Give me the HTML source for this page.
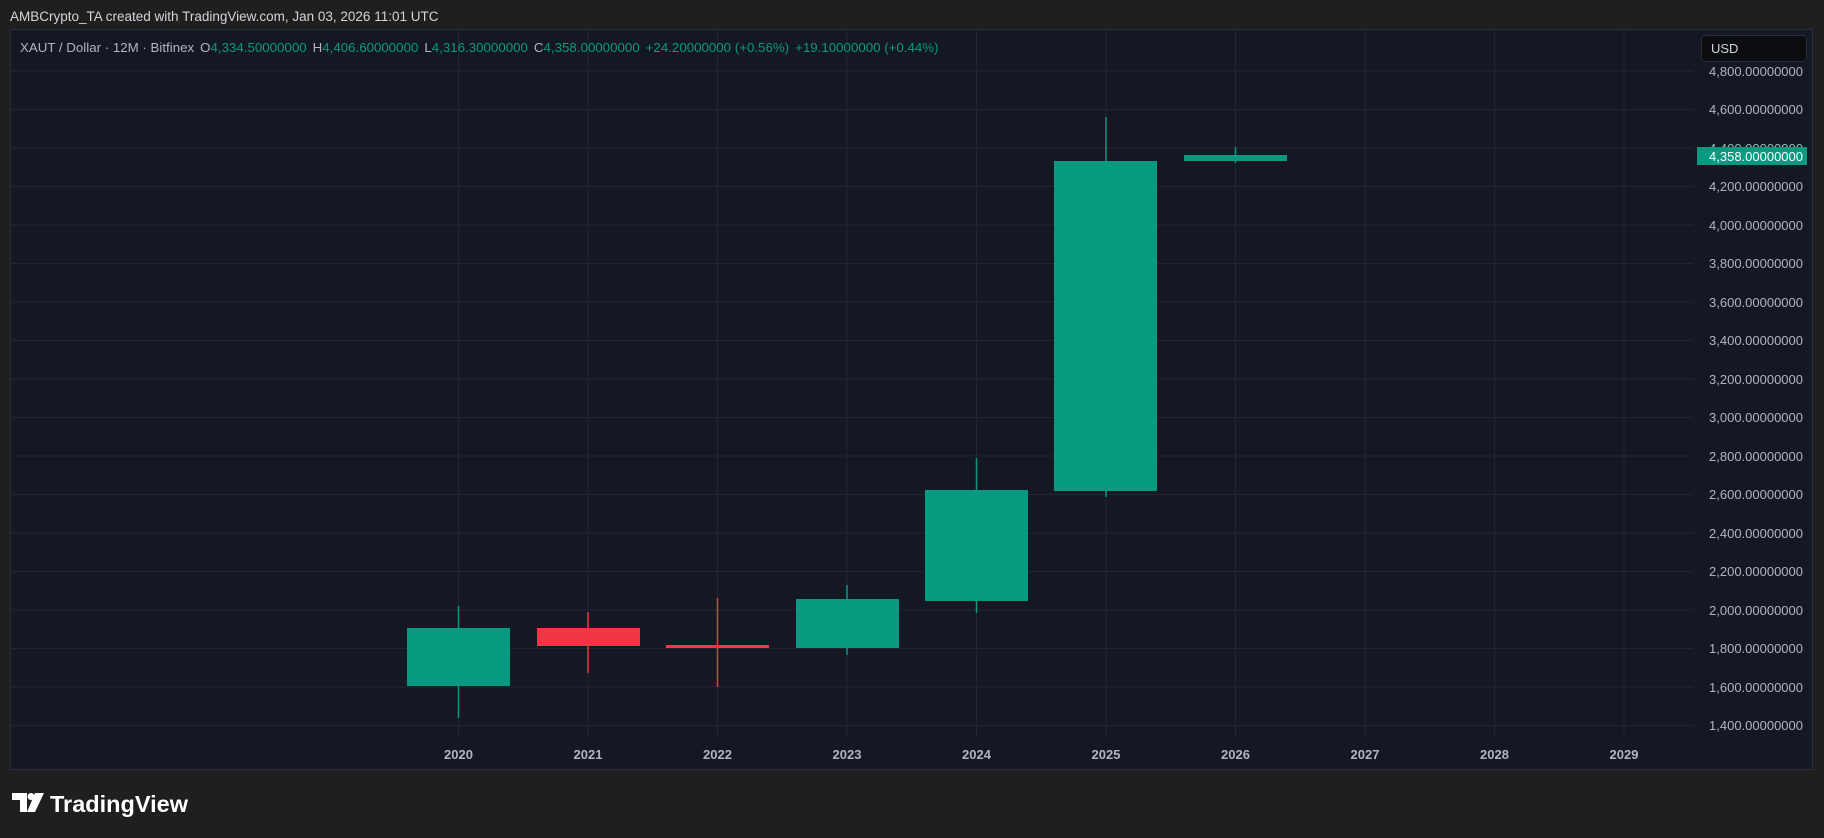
<!DOCTYPE html>
<html><head><meta charset="utf-8"><style>
html,body{margin:0;padding:0;background:#1f1f1f;width:1824px;height:838px;overflow:hidden;font-family:"Liberation Sans",sans-serif}
svg{display:block}
</style></head><body>
<svg width="1824" height="838" viewBox="0 0 1824 838" xmlns="http://www.w3.org/2000/svg" font-family="Liberation Sans, sans-serif">
<rect x="0" y="0" width="1824" height="838" fill="#1f1f1f"/>
<text x="10" y="21" fill="#d1d4dc" font-size="13.5">AMBCrypto_TA created with TradingView.com, Jan 03, 2026 11:01 UTC</text>
<rect x="10.5" y="29.5" width="1802" height="740" fill="#141823" stroke="#2a2e39"/>
<g stroke="#222633" stroke-width="1">
<line x1="11" x2="1693" y1="71" y2="71"/><line x1="11" x2="1693" y1="109.5" y2="109.5"/><line x1="11" x2="1693" y1="148" y2="148"/><line x1="11" x2="1693" y1="186.5" y2="186.5"/><line x1="11" x2="1693" y1="225" y2="225"/><line x1="11" x2="1693" y1="263.5" y2="263.5"/><line x1="11" x2="1693" y1="302" y2="302"/><line x1="11" x2="1693" y1="340.5" y2="340.5"/><line x1="11" x2="1693" y1="379" y2="379"/><line x1="11" x2="1693" y1="417.5" y2="417.5"/><line x1="11" x2="1693" y1="456" y2="456"/><line x1="11" x2="1693" y1="494.5" y2="494.5"/><line x1="11" x2="1693" y1="533" y2="533"/><line x1="11" x2="1693" y1="571.5" y2="571.5"/><line x1="11" x2="1693" y1="610" y2="610"/><line x1="11" x2="1693" y1="648.5" y2="648.5"/><line x1="11" x2="1693" y1="687" y2="687"/><line x1="11" x2="1693" y1="725.5" y2="725.5"/>
<line x1="458.5" x2="458.5" y1="30" y2="738"/><line x1="588" x2="588" y1="30" y2="738"/><line x1="717.5" x2="717.5" y1="30" y2="738"/><line x1="847" x2="847" y1="30" y2="738"/><line x1="976.5" x2="976.5" y1="30" y2="738"/><line x1="1106" x2="1106" y1="30" y2="738"/><line x1="1235.5" x2="1235.5" y1="30" y2="738"/><line x1="1365" x2="1365" y1="30" y2="738"/><line x1="1494.5" x2="1494.5" y1="30" y2="738"/><line x1="1624" x2="1624" y1="30" y2="738"/>
</g>
<text x="20" y="52" font-size="13.3" fill="#b2b5be">XAUT / Dollar · 12M · Bitfinex<tspan dx="6">O</tspan><tspan fill="#089981">4,334.50000000</tspan><tspan dx="6">H</tspan><tspan fill="#089981">4,406.60000000</tspan><tspan dx="6">L</tspan><tspan fill="#089981">4,316.30000000</tspan><tspan dx="6">C</tspan><tspan fill="#089981">4,358.00000000</tspan><tspan dx="6" fill="#089981">+24.20000000 (+0.56%)</tspan><tspan dx="6" fill="#089981">+19.10000000 (+0.44%)</tspan></text>
<g stroke-width="1.5">
<line x1="458.5" x2="458.5" y1="606" y2="718" stroke="#089981"/>
<rect x="407" y="628" width="103" height="58" fill="#089981"/>
<line x1="588" x2="588" y1="612" y2="673" stroke="#f23645"/>
<rect x="537" y="628" width="103" height="18" fill="#f23645"/>
<line x1="717.5" x2="717.5" y1="598" y2="687" stroke="#f23645"/>
<rect x="666" y="645" width="103" height="3" fill="#f23645"/>
<line x1="847" x2="847" y1="585" y2="655" stroke="#089981"/>
<rect x="796" y="599" width="103" height="49" fill="#089981"/>
<line x1="976.5" x2="976.5" y1="458" y2="613" stroke="#089981"/>
<rect x="925" y="490" width="103" height="111" fill="#089981"/>
<line x1="1106" x2="1106" y1="117" y2="497" stroke="#089981"/>
<rect x="1054" y="161" width="103" height="330" fill="#089981"/>
<line x1="1235.5" x2="1235.5" y1="147" y2="163" stroke="#089981"/>
<rect x="1184" y="155" width="103" height="6" fill="#089981"/>
</g>
<g font-size="13" fill="#b2b5be" text-anchor="end">
<text x="1803" y="76">4,800.00000000</text><text x="1803" y="114">4,600.00000000</text><text x="1803" y="153">4,400.00000000</text><text x="1803" y="191">4,200.00000000</text><text x="1803" y="230">4,000.00000000</text><text x="1803" y="268">3,800.00000000</text><text x="1803" y="307">3,600.00000000</text><text x="1803" y="345">3,400.00000000</text><text x="1803" y="384">3,200.00000000</text><text x="1803" y="422">3,000.00000000</text><text x="1803" y="461">2,800.00000000</text><text x="1803" y="499">2,600.00000000</text><text x="1803" y="538">2,400.00000000</text><text x="1803" y="576">2,200.00000000</text><text x="1803" y="615">2,000.00000000</text><text x="1803" y="653">1,800.00000000</text><text x="1803" y="692">1,600.00000000</text><text x="1803" y="730">1,400.00000000</text>
</g>
<rect x="1697" y="147" width="110" height="18" fill="#089981"/>
<text x="1803" y="161" font-size="13" fill="#ffffff" text-anchor="end">4,358.00000000</text>
<rect x="1701.5" y="35.5" width="105" height="26" rx="4" fill="#0c0d10" stroke="#2a2e39"/>
<text x="1711" y="53" font-size="13" fill="#d1d4dc">USD</text>
<g font-size="13" fill="#b2b5be" font-weight="bold" text-anchor="middle">
<text x="458.5" y="759">2020</text><text x="588" y="759">2021</text><text x="717.5" y="759">2022</text><text x="847" y="759">2023</text><text x="976.5" y="759">2024</text><text x="1106" y="759">2025</text><text x="1235.5" y="759">2026</text><text x="1365" y="759">2027</text><text x="1494.5" y="759">2028</text><text x="1624" y="759">2029</text>
</g>
<g fill="#ffffff">
<path d="M12 793h15v19h-7v-12h-8z"/><circle cx="31" cy="796.5" r="3.5"/><path d="M35 793h9l-9 19h-8z"/>
</g>
<text x="50" y="812" font-size="23.5" fill="#ffffff" font-weight="bold">TradingView</text>
</svg>
</body></html>
